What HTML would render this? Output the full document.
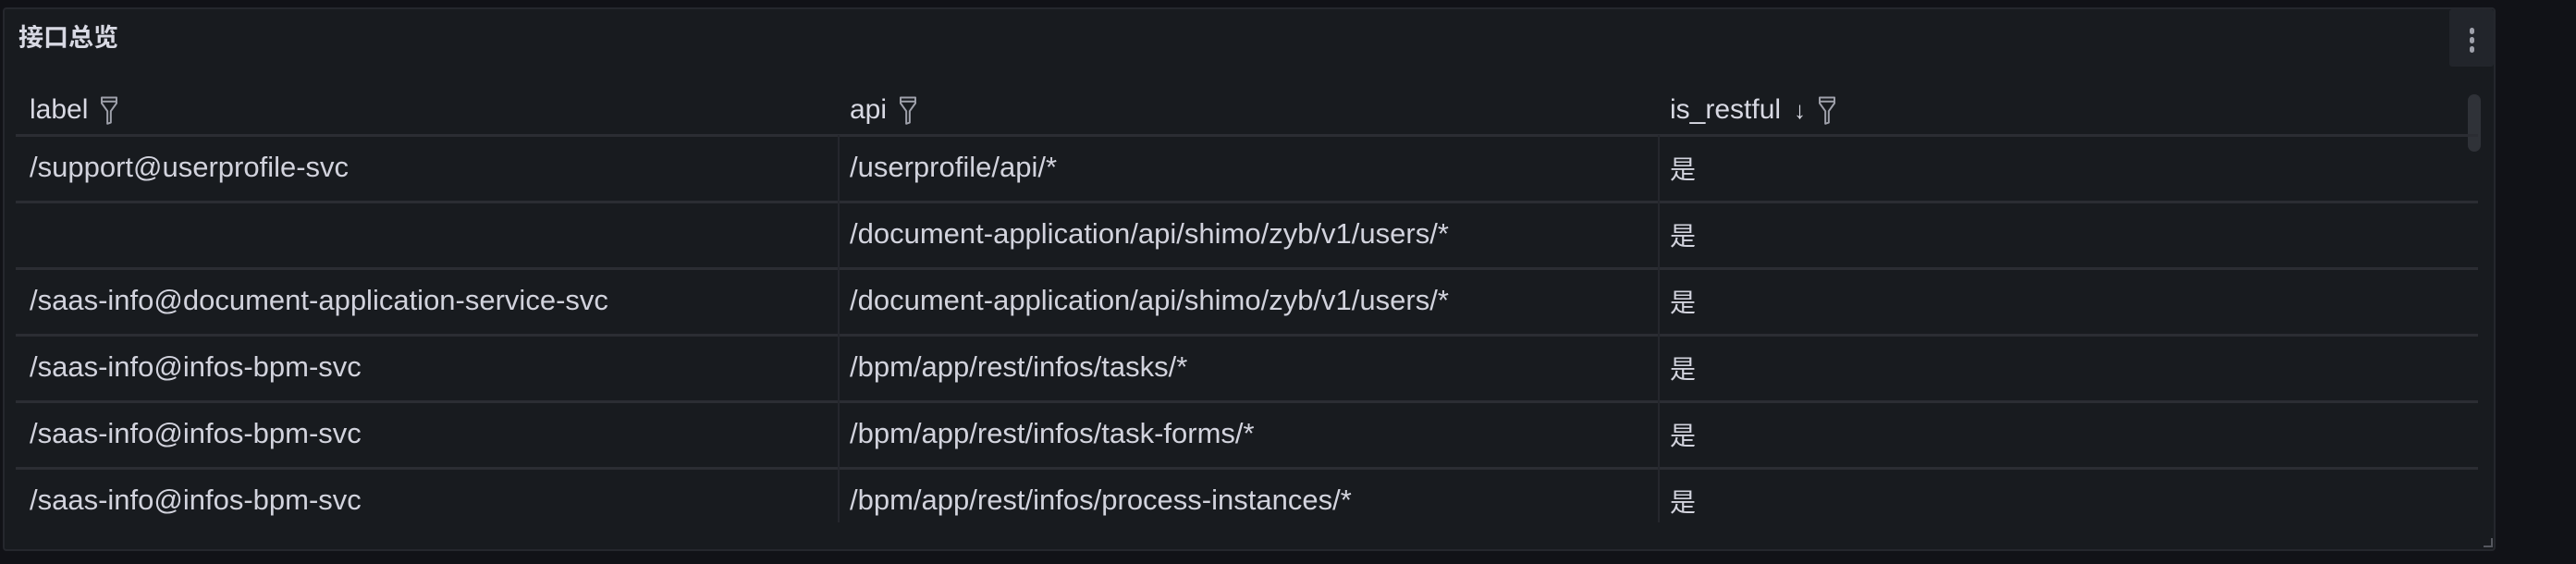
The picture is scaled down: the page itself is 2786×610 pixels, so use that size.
<!DOCTYPE html>
<html><head><meta charset="utf-8"><style>
html,body{margin:0;padding:0;width:2786px;height:610px;background:#111217;overflow:hidden;font-family:"Liberation Sans","Noto Sans CJK SC",sans-serif;color:#d0d1dc}
.panel{position:absolute;left:3px;top:8px;width:2696px;height:588px;background:#181b1f;border:2px solid #25272d;border-radius:4px;box-sizing:border-box}
.title{position:absolute;left:15px;top:9px;font-size:27px;font-weight:bold;color:#d8d9e3}
.menu{position:absolute;right:0;top:0;width:48px;height:62px;background:#22252b;border-radius:3px}
.menu i{position:absolute;left:22px;width:5px;height:7px;border-radius:3px;background:#9fa1ab}
.hdr{position:absolute;top:102px;font-size:30px;font-weight:500;color:#d8d9e3;display:flex;align-items:center;gap:12px}
.hline{position:absolute;left:17px;width:2663px;height:3px;background:#2b2d33}
.vline{position:absolute;width:2px;background:#25272d;top:146px;height:419px}
.cell{position:absolute;font-size:31px;color:#d2d3dd;white-space:nowrap}
.cj{position:absolute;font-size:28px;color:#d2d3dd}
.sb{position:absolute;left:2664px;top:92px;width:14px;height:62px;border-radius:7px;background:#2f3238}
</style></head><body>
<div class="panel">
<div class="title">接口总览</div>
<div class="menu"><i style="top:20px"></i><i style="top:30px"></i><i style="top:40px"></i></div>
<div class="sb"></div>
</div>
<svg width="0" height="0" style="position:absolute"><defs><symbol id="f" viewBox="0 0 16 26"><path d="M1.5 2h13v5l-5 7v10l-3 1v-11l-5-7z" fill="none" stroke="#9fa1ab" stroke-width="1.6" stroke-linejoin="round"/><path d="M1.5 5.5h13" stroke="#9fa1ab" stroke-width="1.6"/></symbol></defs></svg>
<div class="hdr" style="left:32px">label <svg width="22" height="32"><use href="#f"/></svg></div>
<div class="hdr" style="left:919px">api <svg width="22" height="32"><use href="#f"/></svg></div>
<div class="hdr" style="left:1806px">is_restful <span style="font-size:26px;margin-left:2px">↓</span> <svg width="22" height="32"><use href="#f"/></svg></div>
<div class="hline" style="top:145px"></div>
<div class="hline" style="top:217px"></div>
<div class="hline" style="top:289px"></div>
<div class="hline" style="top:361px"></div>
<div class="hline" style="top:433px"></div>
<div class="hline" style="top:505px"></div>
<div class="vline" style="left:906px"></div>
<div class="vline" style="left:1793px"></div>
<div class="cell" style="left:32px;top:163px">/support@userprofile-svc</div>
<div class="cell" style="left:919px;top:163px">/userprofile/api/*</div>
<div class="cj" style="left:1806px;top:162px">是</div>
<div class="cell" style="left:919px;top:235px">/document-application/api/shimo/zyb/v1/users/*</div>
<div class="cj" style="left:1806px;top:234px">是</div>
<div class="cell" style="left:32px;top:307px">/saas-info@document-application-service-svc</div>
<div class="cell" style="left:919px;top:307px">/document-application/api/shimo/zyb/v1/users/*</div>
<div class="cj" style="left:1806px;top:306px">是</div>
<div class="cell" style="left:32px;top:379px">/saas-info@infos-bpm-svc</div>
<div class="cell" style="left:919px;top:379px">/bpm/app/rest/infos/tasks/*</div>
<div class="cj" style="left:1806px;top:378px">是</div>
<div class="cell" style="left:32px;top:451px">/saas-info@infos-bpm-svc</div>
<div class="cell" style="left:919px;top:451px">/bpm/app/rest/infos/task-forms/*</div>
<div class="cj" style="left:1806px;top:450px">是</div>
<div class="cell" style="left:32px;top:523px">/saas-info@infos-bpm-svc</div>
<div class="cell" style="left:919px;top:523px">/bpm/app/rest/infos/process-instances/*</div>
<div class="cj" style="left:1806px;top:522px">是</div>
<div style="position:absolute;left:2686px;top:582px;width:8px;height:8px;border-right:2px solid #55575f;border-bottom:2px solid #55575f"></div>
</body></html>
